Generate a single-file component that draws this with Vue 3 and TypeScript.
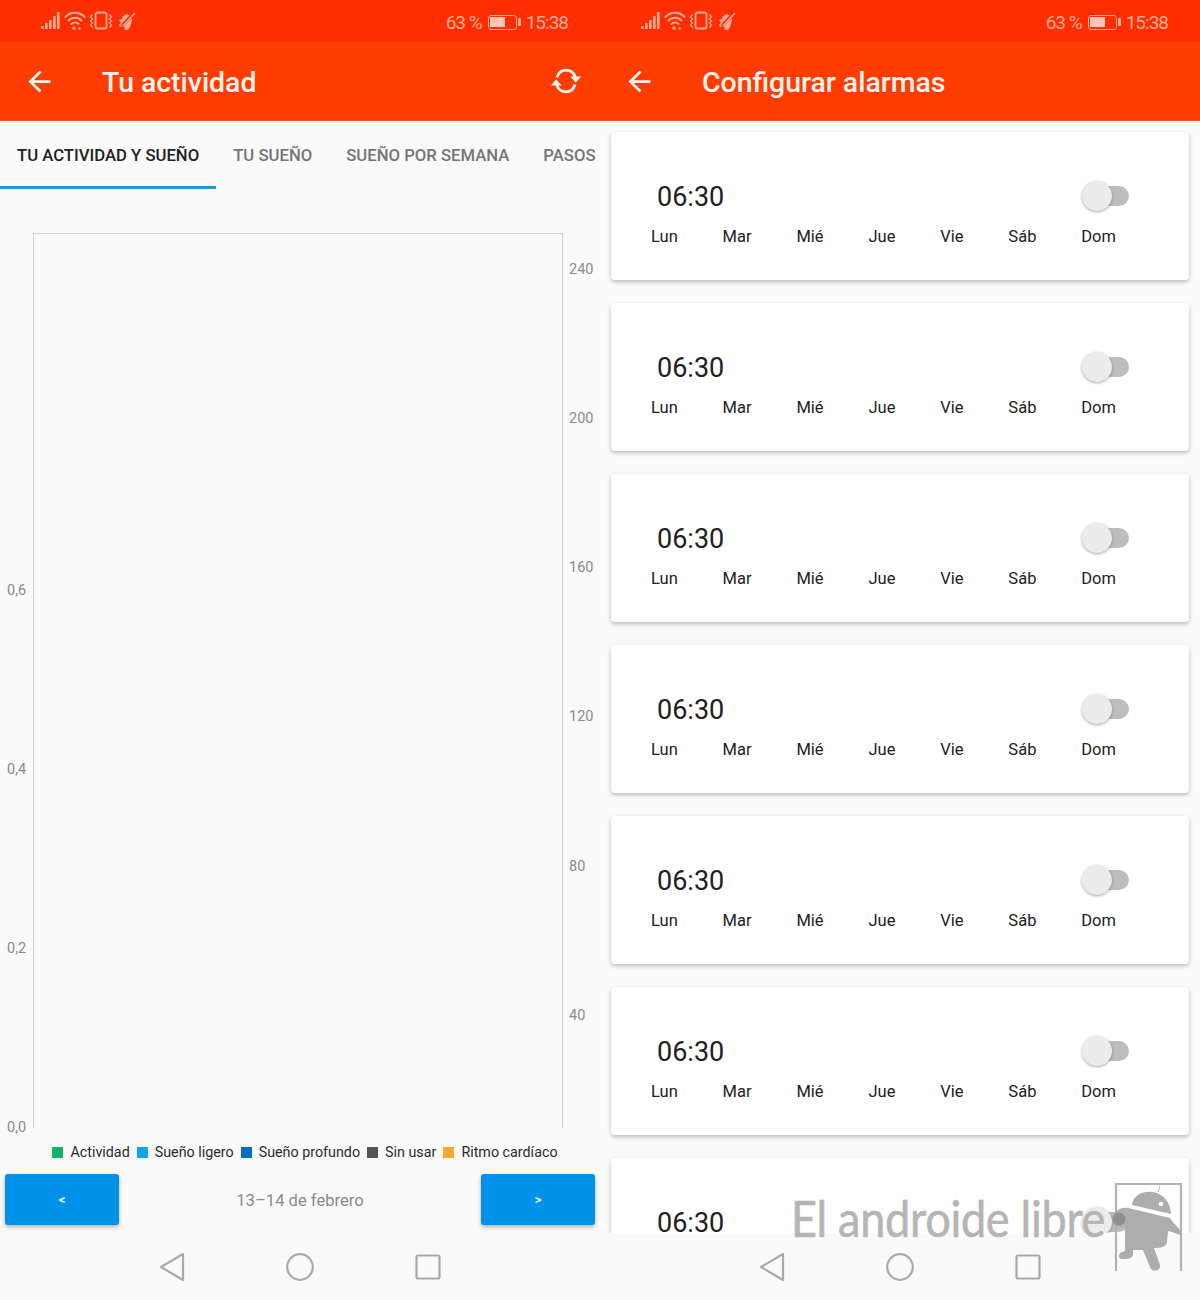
<template>
  <div class="page">
    <section v-for="screen in screens" :key="screen.title" class="phone">
      <div class="status-bar">
        <svg class="status-icons" width="96" height="20" viewBox="0 0 96 20" aria-hidden="true">
          <rect v-for="bar in signalBars" :key="bar.x" :x="bar.x" :y="18 - bar.h" width="2.6" :height="bar.h" rx="0.6" fill="currentColor" />
          <g fill="none" stroke="currentColor" stroke-width="2" stroke-linecap="round">
            <path d="M24.5 6A13 13 0 0 1 43.5 6" />
            <path d="M27.5 9.6A9 9 0 0 1 40.5 9.6" />
            <path d="M30.5 13A5 5 0 0 1 37.5 13" />
            <rect x="54.5" y="1.5" width="11" height="16" rx="2" stroke-width="1.8" />
            <path d="M51 4l-1.5 2 2 2-2 2 2 2-2 2 1.5 2" stroke-width="1.3" />
            <path d="M69 4l1.5 2-2 2 2 2-2 2 2 2-1.5 2" stroke-width="1.3" />
          </g>
          <circle cx="33" cy="17" r="1.8" fill="currentColor" />
          <circle cx="38.5" cy="17.5" r="1.2" fill="currentColor" />
          <path d="M78 9l3-1 1-3 4-2 4 2 1 5-2 6-2 3h-3l-1-4-4 1-1-2 2-2z" fill="currentColor" />
          <path d="M81 15L94 1" stroke="#ff2e00" stroke-width="3.4" />
          <path d="M82 15L94 2" stroke="currentColor" stroke-width="1.6" />
        </svg>
        <div class="status-right">
          <span class="status-text">63 %</span>
          <span class="battery"><span class="battery-level"></span></span>
          <span class="status-text">15:38</span>
        </div>
      </div>

      <header class="app-bar">
        <svg class="back" width="33" height="33" viewBox="0 0 24 24" aria-hidden="true">
          <path fill="currentColor" d="M20 11H7.83l5.59-5.59L12 4l-8 8 8 8 1.41-1.41L7.83 13H20v-2z" />
        </svg>
        <h1>{{ screen.title }}</h1>
        <svg v-if="screen.refresh" class="refresh" width="30" height="26" viewBox="0 0 30 26" aria-hidden="true">
          <g fill="none" stroke="currentColor" stroke-width="2.8">
            <path d="M6 9.5C7.5 4.5 11 2.2 15 2.2c4 0 8 2 9.5 7.8" />
            <path d="M24 16.5C22.5 21.5 19 23.8 15 23.8c-4 0-8-2-9.5-7.8" />
          </g>
          <path d="M19.5 8.5H30l-5.2 6.2zM0 17.5h10.5L5.2 11.3z" fill="currentColor" />
        </svg>
      </header>

      <main v-if="screen.refresh" class="activity">
        <nav class="tabs">
          <span v-for="(tab, i) in tabs" :key="tab" class="tab" :class="{ active: i === 0 }">{{ tab }}</span>
        </nav>
        <div class="chart">
          <div class="plot"></div>
          <span v-for="t in leftTicks" :key="t.label" class="tick tick-left" :style="{ top: t.top + 'px' }">{{ t.label }}</span>
          <span v-for="t in rightTicks" :key="t.label" class="tick tick-right" :style="{ top: t.top + 'px' }">{{ t.label }}</span>
        </div>
        <div class="legend">
          <span v-for="item in legend" :key="item.label" class="legend-item">
            <i :style="{ background: item.color }"></i>{{ item.label }}
          </span>
        </div>
        <div class="pager">
          <button type="button">&lt;</button>
          <span class="range">13–14 de febrero</span>
          <button type="button">&gt;</button>
        </div>
      </main>

      <main v-else class="alarms">
        <article v-for="n in 7" :key="n" class="alarm">
          <div class="alarm-top">
            <span class="time">06:30</span>
            <span class="switch"><span class="thumb"></span></span>
          </div>
          <div class="days">
            <span v-for="day in days" :key="day">{{ day }}</span>
          </div>
        </article>
      </main>

      <footer class="nav-bar">
        <svg width="26" height="30" viewBox="0 0 26 30" aria-hidden="true">
          <path d="M24 2L2 15l22 13z" fill="none" stroke="#aaa" stroke-width="2.2" stroke-linejoin="round" />
        </svg>
        <svg width="30" height="30" viewBox="0 0 30 30" aria-hidden="true">
          <circle cx="15" cy="15" r="12.8" fill="none" stroke="#aaa" stroke-width="2.2" />
        </svg>
        <svg width="26" height="26" viewBox="0 0 26 26" aria-hidden="true">
          <rect x="1.5" y="1.5" width="23" height="23" rx="1.5" fill="none" stroke="#aaa" stroke-width="2.2" />
        </svg>
      </footer>
    </section>

    <div class="watermark">
      <span>El androide libre</span>
      <svg width="140" height="110" viewBox="0 0 140 110" aria-hidden="true">
        <path d="M56 101V14h65v87" fill="none" stroke="#b3b3b3" stroke-width="2.2" />
        <path d="M98 22l2-6" stroke="#b3b3b3" stroke-width="1" />
        <path d="M72 35C73 25 83 21 92 22c11 1 19 11 19 22z" fill="#adadad" />
        <circle cx="101" cy="34" r="2.3" fill="#fff" />
        <path d="M56 41C60 38 65 37 68 38L110 48L112 51L120 60V65L112 62L108 61L107 72C107 76 102 78 94 78L100 95C101 101 92 103 90 97L83 80H73V85C72 88 69 89 65 89H62C58 89 58 83 62 82L65 81V57C61 58 55 57 53 53C51 48 52 44 56 41Z" fill="#adadad" />
        <circle cx="59" cy="49" r="6.5" fill="#8f8f8f" />
      </svg>
    </div>
  </div>
</template>

<script setup lang="ts">
interface Tick {
  label: string
  top: number
}

const screens = [
  { title: 'Tu actividad', refresh: true },
  { title: 'Configurar alarmas', refresh: false },
]

const signalBars = [
  { x: 0, h: 3 },
  { x: 4, h: 6 },
  { x: 8, h: 9 },
  { x: 12, h: 13 },
  { x: 16, h: 17 },
]

const tabs = ['TU ACTIVIDAD Y SUEÑO', 'TU SUEÑO', 'SUEÑO POR SEMANA', 'PASOS']

// tops are relative to the chart box, which starts under the tabs
const leftTicks: Tick[] = [
  { label: '0,6', top: 392 },
  { label: '0,4', top: 571 },
  { label: '0,2', top: 750 },
  { label: '0,0', top: 929 },
]
const rightTicks: Tick[] = [
  { label: '240', top: 71 },
  { label: '200', top: 220 },
  { label: '160', top: 369 },
  { label: '120', top: 518 },
  { label: '80', top: 668 },
  { label: '40', top: 817 },
]

const legend = [
  { label: 'Actividad', color: '#12b464' },
  { label: 'Sueño ligero', color: '#0ea5ee' },
  { label: 'Sueño profundo', color: '#0a6ebd' },
  { label: 'Sin usar', color: '#555555' },
  { label: 'Ritmo cardíaco', color: '#ffa630' },
]

const days = ['Lun', 'Mar', 'Mié', 'Jue', 'Vie', 'Sáb', 'Dom']
</script>

<style>
html,
body {
  margin: 0;
  background: #fafafa;
}
</style>

<style scoped>
.page {
  position: relative;
  width: 1200px;
  height: 1300px;
  display: flex;
  overflow: hidden;
  font-family: Roboto, "Liberation Sans", sans-serif;
  background: #fafafa;
}

.phone {
  width: 600px;
  height: 1300px;
  display: flex;
  flex-direction: column;
  overflow: hidden;
}

.status-bar {
  height: 42px;
  flex-shrink: 0;
  background: #ff2e00;
  color: #ffab95;
  display: flex;
  align-items: center;
  justify-content: space-between;
  padding: 0 32px 0 41px;
}

.status-icons {
  display: block;
}

.status-right {
  display: flex;
  align-items: center;
  gap: 6px;
  padding-top: 2px;
}

.status-text {
  font-size: 19px;
  letter-spacing: -1px;
}

.battery {
  position: relative;
  display: block;
  width: 29px;
  height: 15px;
  border: 1.5px solid currentColor;
  border-radius: 3px;
  padding: 1.5px;
  box-sizing: border-box;
  margin-right: 3px;
}

.battery::after {
  content: "";
  position: absolute;
  right: -5.5px;
  top: 2px;
  width: 3px;
  height: 8px;
  background: currentColor;
  border-radius: 1px;
}

.battery-level {
  display: block;
  width: 63%;
  height: 100%;
  background: #ffc6b8;
}

.app-bar {
  height: 79px;
  flex-shrink: 0;
  box-sizing: border-box;
  background: #ff3d00;
  color: #fff4ef;
  display: flex;
  align-items: center;
  padding: 0 19px 0 23px;
  border-bottom: 1px solid #ff5a2a;
}

.app-bar h1 {
  margin: 2px 0 0 46px;
  font-size: 28.4px;
  font-weight: 500;
  flex: 1;
}

.activity {
  flex: 1;
  min-height: 0;
  display: flex;
  flex-direction: column;
  background: #fafafa;
}

.tabs {
  height: 68px;
  flex-shrink: 0;
  display: flex;
  box-sizing: border-box;
  overflow: hidden;
}

.tab {
  flex-shrink: 0;
  padding: 0 17px;
  font-size: 16.7px;
  font-weight: 500;
  line-height: 70px;
  color: #757575;
  white-space: nowrap;
  box-sizing: border-box;
  height: 68px;
}

.tab.active {
  color: #212121;
  border-bottom: 3px solid #1e9ad6;
}

.chart {
  position: relative;
  flex: 1;
  min-height: 0;
}

.plot {
  position: absolute;
  left: 33px;
  top: 44px;
  width: 530px;
  height: 895px;
  box-sizing: border-box;
  border: 1px solid #cfcfcf;
  border-bottom: none;
}

.tick {
  position: absolute;
  font-size: 14.5px;
  line-height: 20px;
  color: #8a8a8a;
}

.tick-left {
  left: 7px;
}

.tick-right {
  left: 569px;
}

.legend {
  height: 24px;
  flex-shrink: 0;
  display: flex;
  align-items: center;
  justify-content: center;
  gap: 7px;
  padding-left: 10px;
  font-size: 14.3px;
  color: #2b2b2b;
}

.legend-item {
  display: flex;
  align-items: center;
  gap: 7px;
  white-space: nowrap;
}

.legend-item i {
  display: block;
  width: 11px;
  height: 11px;
}

.pager {
  height: 51px;
  flex-shrink: 0;
  margin: 10px 5px 8px;
  display: flex;
  align-items: center;
  justify-content: space-between;
}

.pager button {
  width: 114px;
  height: 51px;
  border: none;
  border-radius: 3px;
  background: #0091ea;
  color: #fff;
  font-family: inherit;
  font-size: 13px;
  font-weight: 700;
  box-shadow: 0 2px 4px rgba(0, 0, 0, 0.3);
}

.range {
  font-size: 16.6px;
  padding-top: 2px;
  color: #8a8a8a;
}

.alarms {
  flex: 1;
  min-height: 0;
  overflow: hidden;
  display: flex;
  flex-direction: column;
  gap: 23px;
  padding: 11px 11px 0;
  background: #fafafa;
}

.alarm {
  height: 148px;
  flex-shrink: 0;
  box-sizing: border-box;
  background: #fff;
  border-radius: 4px;
  padding: 44px 40px 0;
  box-shadow: 0 2px 4px rgba(0, 0, 0, 0.25);
}

.alarm-top {
  height: 40px;
  display: flex;
  align-items: center;
  justify-content: space-between;
  padding: 0 0 0 6px;
}

.time {
  font-size: 27px;
  padding-top: 2px;
  color: #212121;
}

.switch {
  position: relative;
  display: block;
  width: 43px;
  height: 20px;
  background: #bdbdbd;
  border-radius: 10px;
  margin-right: 20px;
}

.thumb {
  position: absolute;
  left: -4px;
  top: -5px;
  width: 30px;
  height: 30px;
  border-radius: 50%;
  background: #ececec;
  box-shadow: 0 1px 3px rgba(0, 0, 0, 0.35);
}

.days {
  display: flex;
  gap: 44.85px;
  margin-top: 11px;
  font-size: 16.5px;
  line-height: 20px;
  color: #212121;
}

.nav-bar {
  height: 67px;
  flex-shrink: 0;
  background: #fafafa;
  display: flex;
  align-items: center;
  justify-content: center;
  gap: 100px;
  position: relative;
}

.watermark {
  position: absolute;
  left: 791px;
  top: 1170px;
  width: 409px;
  height: 110px;
  pointer-events: none;
}

.watermark span {
  position: absolute;
  left: 0;
  top: 18px;
  font-family: Lato, sans-serif;
  font-size: 50px;
  line-height: 60px;
  color: #b5b5b5;
  white-space: nowrap;
  letter-spacing: -0.3px;
  -webkit-text-stroke: 0.6px #b5b5b5;
  transform: scaleX(0.9);
  transform-origin: left center;
}

.watermark svg {
  position: absolute;
  left: 269px;
  top: 0;
}
</style>
